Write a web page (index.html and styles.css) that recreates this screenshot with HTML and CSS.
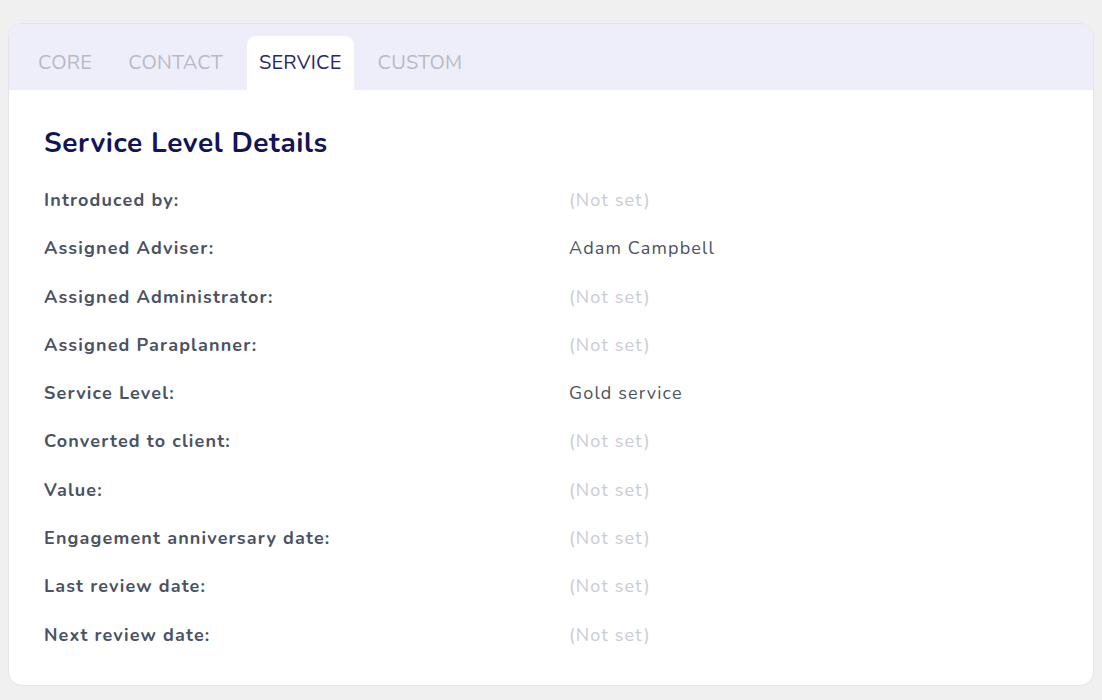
FILE: index.html
```html
<!DOCTYPE html>
<html lang="en">
  <head>
    <meta charset="UTF-8" />
    <meta name="viewport" content="width=device-width, initial-scale=1.0" />
    <title>Client Details - Service</title>
    <link rel="stylesheet" href="styles.css">
  </head>
  <body>
    <div class="card">
      <nav class="tabs">
        <a class="tab">CORE</a>
        <a class="tab">CONTACT</a>
        <a class="tab active">SERVICE</a>
        <a class="tab">CUSTOM</a>
      </nav>

      <section class="panel">
        <h2>Service Level Details</h2>
        <dl class="details">
          <dt>Introduced by:</dt>
          <dd class="empty">(Not set)</dd>
          <dt>Assigned Adviser:</dt>
          <dd>Adam Campbell</dd>
          <dt>Assigned Administrator:</dt>
          <dd class="empty">(Not set)</dd>
          <dt>Assigned Paraplanner:</dt>
          <dd class="empty">(Not set)</dd>
          <dt>Service Level:</dt>
          <dd>Gold service</dd>
          <dt>Converted to client:</dt>
          <dd class="empty">(Not set)</dd>
          <dt>Value:</dt>
          <dd class="empty">(Not set)</dd>
          <dt>Engagement anniversary date:</dt>
          <dd class="empty">(Not set)</dd>
          <dt>Last review date:</dt>
          <dd class="empty">(Not set)</dd>
          <dt>Next review date:</dt>
          <dd class="empty">(Not set)</dd>
        </dl>
      </section>
    </div>
  </body>
</html>
```

FILE: styles.css
```css
* {
  margin: 0;
  padding: 0;
  box-sizing: border-box;
}

body {
  font-family: "Nunito", "Lato", sans-serif;
  background-color: #f0f0f0;
  padding: 23px 8px 14px 8px;
}

.card {
  background-color: white;
  border: 1px solid #e3e3ea;
  border-radius: 14px;
  overflow: hidden;
  height: 663px;
}

/* tab strip */
.tabs {
  display: flex;
  gap: 12px;
  background-color: #eeeefa;
  padding: 12px 0 0 17px;
  height: 66px;
}

.tab {
  display: flex;
  align-items: center;
  padding: 0 12px 2px 12px;
  font-size: 20px;
  letter-spacing: 0.2px;
  color: #b8b9c6;
  border-radius: 9px 9px 0 0;
  cursor: pointer;
}

.tab.active {
  background-color: white;
  color: #27276a;
}

/* detail list */
.panel {
  padding: 34px 35px 0 35px;
}

.panel h2 {
  font-size: 28px;
  line-height: 38px;
  letter-spacing: 0.6px;
  font-weight: 700;
  color: #131358;
  margin-bottom: 14px;
}

.details {
  display: grid;
  grid-template-columns: 525px 1fr;
  grid-auto-rows: 48.3px;
  font-size: 18px;
  letter-spacing: 1.15px;
}

.details dt {
  font-weight: 700;
  color: #4a5263;
  line-height: 48.3px;
}

.details dd {
  color: #4a5263;
  line-height: 48.3px;
}

.details dd.empty {
  color: #c9ccd4;
}
```
